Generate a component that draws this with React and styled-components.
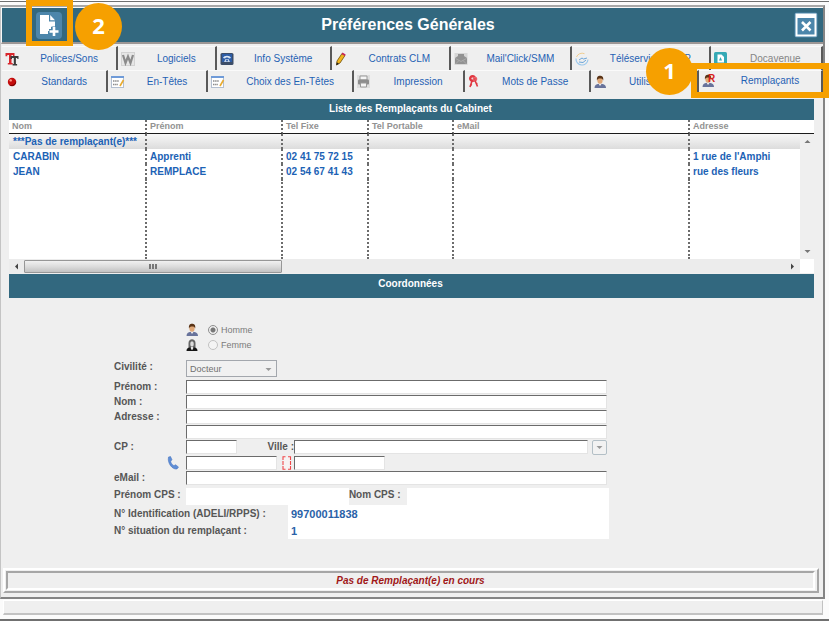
import React from 'react'
import { styled, createGlobalStyle } from 'styled-components'

const columns = [
  { key: 'nom', label: 'Nom', width: 138 },
  { key: 'prenom', label: 'Prénom', width: 136 },
  { key: 'fixe', label: 'Tel Fixe', width: 86 },
  { key: 'portable', label: 'Tel Portable', width: 85 },
  { key: 'email', label: 'eMail', width: 236 },
  { key: 'adresse', label: 'Adresse' },
]

const rows = [
  { nom: '***Pas de remplaçant(e)***' },
  { nom: 'CARABIN', prenom: 'Apprenti', fixe: '02 41 75 72 15', adresse: "1 rue de l'Amphi" },
  { nom: 'JEAN', prenom: 'REMPLACE', fixe: '02 54 67 41 43', adresse: 'rue des fleurs' },
]

const PoliceIcon = () => (
  <svg width="14" height="14" viewBox="0 0 14 14">
    <path d="M.5 1h9v3.200H8V3H6.500v8h1.200v1.500H2.800V11H4V3H2.300v1.200H.5z" fill="#d8262c" />
    <path d="M5.500 4h8v3h-1.200V6h-1.400v6h1.200v1.500H7.600V12h1.200V6H7v1H5.500z" fill="#3a3a3a" />
  </svg>
)

const WordIcon = () => (
  <svg width="14" height="14" viewBox="0 0 14 14">
    <rect x=".5" y=".5" width="13" height="13" fill="#e6e6e6" stroke="#d2d2d2" />
    <path d="M2 3l2.500 8L7 4.500 9.500 11 12 3" fill="none" stroke="#8b8b8b" strokeWidth="2.200" />
  </svg>
)

const SystemIcon = () => (
  <svg width="14" height="14" viewBox="0 0 14 14">
    <rect x=".5" y="1" width="13" height="12" rx="1.500" fill="#3c4d68" />
    <rect x="2" y="2" width="10" height="8" fill="#2d5ca5" />
    <path d="M3 6c1-3 7-3 8 0l-2 .5-1-1H6l-1 1z" fill="#dce7f5" />
    <path d="M4 10l1.500-3h3l1.500 3z" fill="#c3d4ea" />
    <circle cx="7" cy="8.500" r="1" fill="#2d5ca5" />
  </svg>
)

const PencilIcon = () => (
  <svg width="12" height="14" viewBox="0 0 12 14">
    <path d="M2 9L7 1.500l3 2L5 11l-3.500 2z" fill="#f2b51c" stroke="#6d4c08" strokeWidth=".8" />
    <path d="M6.500 2l1-1.500 3.200 2-1 1.500z" fill="#c8245a" />
    <path d="M1.300 13.300l.5-3L4 11.800z" fill="#222" />
  </svg>
)

const MailIcon = () => (
  <svg width="14" height="14" viewBox="0 0 14 14">
    <rect x=".5" y="1" width="13" height="12" fill="#d6d6d6" />
    <path d="M1 6l3-2V2h6v2l3 2v6H1z" fill="#929292" />
    <path d="M1.500 6.500L7 9.500l5.500-3M1.500 12L5 8.500M12.500 12L9 8.500" fill="none" stroke="#b5b5b5" strokeWidth=".7" />
  </svg>
)

const TeleIcon = () => (
  <svg width="14" height="14" viewBox="0 0 14 14" fill="none">
    <path d="M9.500 1.700A6 6 0 0 0 1.500 5" stroke="#f0ce91" />
    <path d="M1 6.500a6 6 0 0 0 12 1" stroke="#9cc8ec" strokeWidth="1.200" />
    <path d="M4 8l3-2 1.500 1L12 6M4 10l4 .5L11 8" stroke="#6ba6da" />
  </svg>
)

const DocavenueIcon = () => (
  <svg width="13" height="13" viewBox="0 0 13 13">
    <rect width="13" height="13" rx="1.500" fill="#35a9b5" />
    <path d="M3.500 2.500h4L10 5v5.500H3.500z" fill="#fff" />
    <path d="M5 8.500L6.500 5 8 8.500z" fill="#35a9b5" />
  </svg>
)

const RedBallIcon = () => (
  <svg width="14" height="14" viewBox="0 0 14 14">
    <circle cx="7" cy="7" r="4.200" fill="#c40d0d" />
    <path d="M4.500 10.200a4.200 4.200 0 0 0 6.500-4.500c-.5 3-3 4.500-6.500 4.500z" fill="#760303" />
    <circle cx="5.700" cy="5.400" r="1.200" fill="#ff9a8a" />
  </svg>
)

const SheetIcon = () => (
  <svg width="14" height="12" viewBox="0 0 14 12">
    <rect x=".5" y=".5" width="12" height="11" fill="#fff" stroke="#b3bfd0" />
    <rect x="0" y="0" width="13" height="2" fill="#6f9bd8" />
    <path d="M2 5h6M2 8.500h5" stroke="#8a8a8a" strokeWidth="1.500" strokeDasharray="1.500 .6" />
    <path d="M9 10L12.500 4" stroke="#e9ab2e" strokeWidth="1.600" />
  </svg>
)

const PrinterIcon = () => (
  <svg width="13" height="13" viewBox="0 0 13 13">
    <rect width="13" height="13" fill="#dedede" />
    <path d="M3 1h7v4H3z" fill="#f5f5f5" stroke="#999" />
    <rect x="1" y="4.500" width="11" height="5" rx="1" fill="#8d8d8d" />
    <path d="M3.500 8h6v4h-6z" fill="#f5f5f5" stroke="#999" />
  </svg>
)

const KeysIcon = () => (
  <svg width="11" height="13" viewBox="0 0 11 13" fill="none">
    <circle cx="4.500" cy="3.500" r="2.300" stroke="#e03640" strokeWidth="2.400" />
    <circle cx="7" cy="4" r="1.600" stroke="#ea6067" strokeWidth="1.500" />
    <path d="M4 6L2 12M2.500 9.500l1.500.5M7 5.500l2.500 6M8 9l1.500-.5" stroke="#e03640" strokeWidth="1.600" />
  </svg>
)

const UserIcon = ({ letter }) => (
  <svg width="14" height="14" viewBox="0 0 14 14">
    <path d="M.5 13c0-3 2-4.300 5.500-4.300s6 1.300 6 4.300z" fill="#68739b" />
    <path d="M4.500 8.500L6 11l1.800-2.500z" fill="#f2f2f2" />
    <ellipse cx="6" cy="5.500" rx="2.600" ry="3.300" fill="#e0a878" />
    <path d="M3 5.500C2.500 2 4 .8 6 .8s3.800 1 3.200 4.700C8.500 3.500 7 3.200 6 3.500c-1.500 0-2.500.5-3 2z" fill="#593316" />
    {letter && <text x="6" y="7.500" fontSize="10" fontWeight="700" fontFamily="Liberation Sans, sans-serif" fill="#d81e1e">{letter}</text>}
  </svg>
)

const WomanIcon = () => (
  <svg width="14" height="12" viewBox="0 0 14 12">
    <path d="M2.500 9V4c0-5 7-5 7 0v5z" fill="#666" />
    <ellipse cx="6" cy="5" rx="1.800" ry="2.800" fill="#ddd" />
    <path d="M.5 12c0-2.500 1-3.200 3.500-3.500l2 2 2-2c2.500.3 3.500 1 3.500 3.500z" fill="#161616" />
    <path d="M5 8h2v2L6 11 5 10z" fill="#e5e5e5" />
  </svg>
)

const PhoneIcon = () => (
  <svg width="12" height="14" viewBox="0 0 12 14">
    <path d="M1.500 1L3.500.5 5 3.800 3.700 5.200c.3 2 1.600 3.700 3.300 4.500l1.500-1L11.500 11l-1.500 2C5.500 14 0 7 1.500 1z" fill="#5f8ed6" stroke="#3e6dbb" strokeWidth=".5" />
  </svg>
)

const MobileIcon = () => (
  <svg width="10" height="14" viewBox="0 0 10 14">
    <rect x="1" y=".7" width="7.500" height="12.500" fill="#f7f3f3" />
    <path d="M1 4V.7h2.500M6 .7h2.500V4M8.500 10v3.200H6M3.500 13.200H1V10M1 5v4M8.500 5v4" fill="none" stroke="#f0474a" strokeWidth="1.100" />
  </svg>
)

const NewPageIcon = () => (
  <svg width="26" height="27" viewBox="0 0 26 27">
    <rect width="26" height="27" rx="4" fill="#4c86ab" />
    <path d="M4 3h9v6.500h6V15h-4v4h-3v3H4z" fill="#fff" />
    <path d="M14.200 3l4.800 5.200h-4.800z" fill="#fff" />
    <path d="M18 14.500v9.500M13 19.500h9.500" stroke="#4c86ab" strokeWidth="5" />
    <path d="M18 15v9M13.500 19.500h9" stroke="#fff" strokeWidth="2.600" />
  </svg>
)

const CloseIcon = () => (
  <svg width="24" height="26" viewBox="0 0 24 26">
    <rect x=".5" y=".5" width="23" height="25" rx="2" fill="#4c86ab" />
    <path d="M1.500 1.500h21v23h-21z M3.500 6v16.500h17V6z" fill="#fff" fillRule="evenodd" />
    <path d="M8 10l8.500 8.500M16.500 10l-8.500 8.500" stroke="#fff" strokeWidth="2.600" />
  </svg>
)

const Arrow = ({ d }) => (
  <svg width="7" height="7" viewBox="0 0 7 7"><path d={d} fill="currentColor" /></svg>
)
const UP = 'M0.500 5L3.500 2 6.500 5z'
const DOWN = 'M0.500 2h6L3.500 5z'
const LEFT = 'M5 .5v6L2 3.500z'
const RIGHT = 'M2 .5v6l3-3z'

const topTabs = [
  { label: 'Polices/Sons', size: 116, icon: <PoliceIcon /> },
  { label: 'Logiciels', size: 98, icon: <WordIcon /> },
  { label: 'Info Système', size: 115, icon: <SystemIcon /> },
  { label: 'Contrats CLM', size: 119, icon: <PencilIcon /> },
  { label: "Mail'Click/SMM", size: 121, icon: <MailIcon /> },
  { label: 'Téléservices DMP', size: 139, icon: <TeleIcon /> },
  { label: 'Docavenue', size: 112, icon: <DocavenueIcon />, muted: true },
]

const bottomTabs = [
  { label: 'Standards', size: 106, icon: <RedBallIcon /> },
  { label: 'En-Têtes', size: 99, icon: <SheetIcon /> },
  { label: 'Choix des En-Têtes', size: 147, icon: <SheetIcon /> },
  { label: 'Impression', size: 110, icon: <PrinterIcon /> },
  { label: 'Mots de Passe', size: 126, icon: <KeysIcon /> },
  { label: 'Utilisateurs', size: 108, icon: <UserIcon /> },
  { label: 'Remplaçants', size: 124, icon: <UserIcon letter="R" />, step: 1 },
]

const TabLine = ({ tabs, height }) => (
  <TabRow $height={height}>
    {tabs.map((tab) => (
      <TabCell key={tab.label} $size={tab.size}>
        <Tab type="button" $muted={tab.muted} $active={!!tab.step}>
          {tab.icon}
          <span>{tab.label}</span>
        </Tab>
        {tab.step && <TabFrame />}
        {tab.step && <TabStep>{tab.step}</TabStep>}
      </TabCell>
    ))}
  </TabRow>
)

const ReplacementList = () => (
  <ListBox>
    <SectionTitle $height={21}>Liste des Remplaçants du Cabinet</SectionTitle>
    <ListArea>
      <Table>
        <colgroup>
          {columns.map((c) => <col key={c.key} width={c.width} />)}
        </colgroup>
        <thead>
          <tr>{columns.map((c) => <Th key={c.key}>{c.label}</Th>)}</tr>
        </thead>
        <tbody>
          {rows.map((row, i) => (
            <Row key={row.nom} $selected={i === 0}>
              {columns.map((c) => <Td key={c.key}>{row[c.key]}</Td>)}
            </Row>
          ))}
          <FillRow>
            {columns.map((c) => <Td key={c.key} />)}
          </FillRow>
        </tbody>
      </Table>
      <ScrollColumn>
        <VerticalScroll>
          <Arrow d={UP} />
          <Arrow d={DOWN} />
        </VerticalScroll>
      </ScrollColumn>
    </ListArea>
    <HorizontalScroll>
      <Arrow d={LEFT} />
      <Thumb><i /><i /><i /></Thumb>
      <Arrow d={RIGHT} />
    </HorizontalScroll>
  </ListBox>
)

const Coordinates = () => (
  <Form>
    <RadioRow>
      <UserIcon />
      <Radio id="homme" type="radio" name="sexe" defaultChecked disabled />
      <RadioLabel htmlFor="homme">Homme</RadioLabel>
    </RadioRow>
    <RadioRow>
      <WomanIcon />
      <Radio id="femme" type="radio" name="sexe" disabled />
      <RadioLabel htmlFor="femme">Femme</RadioLabel>
    </RadioRow>
    <SelectRow>
      <Label htmlFor="civilite">Civilité :</Label>
      <SelectBox>
        <Select id="civilite" disabled><option>Docteur</option></Select>
        <Arrow d={DOWN} />
      </SelectBox>
    </SelectRow>
    <FormRow>
      <Label htmlFor="prenom">Prénom :</Label>
      <Input id="prenom" />
    </FormRow>
    <FormRow>
      <Label htmlFor="nom">Nom :</Label>
      <Input id="nom" />
    </FormRow>
    <FormRow>
      <Label htmlFor="adresse">Adresse :</Label>
      <Input id="adresse" />
    </FormRow>
    <FormRow>
      <Label as="span" />
      <Input aria-label="Adresse (suite)" />
    </FormRow>
    <FormRow>
      <Label htmlFor="cp">CP :</Label>
      <Input id="cp" $width={51} />
      <InnerLabel htmlFor="ville" $width={57}>Ville :</InnerLabel>
      <Input id="ville" />
      <DropButton type="button" aria-label="Choisir une ville"><Arrow d={DOWN} /></DropButton>
    </FormRow>
    <PhoneRow>
      <IconLabel htmlFor="fixe" aria-label="Tel Fixe"><PhoneIcon /></IconLabel>
      <Input id="fixe" $width={91} />
      <MobileLabel htmlFor="portable" aria-label="Tel Portable"><MobileIcon /></MobileLabel>
      <Input id="portable" $width={91} />
    </PhoneRow>
    <FormRow>
      <Label htmlFor="email">eMail :</Label>
      <Input id="email" />
    </FormRow>
    <CpsRow>
      <Label htmlFor="prenomCps">Prénom CPS :</Label>
      <PlainInput id="prenomCps" readOnly />
      <InnerLabel htmlFor="nomCps" $width={58} $gap={8}>Nom CPS :</InnerLabel>
      <PlainInput id="nomCps" $grow={5} readOnly />
    </CpsRow>
    <NumberRow>
      <Label htmlFor="adeli" $wide>N° Identification (ADELI/RPPS) :</Label>
      <PlainInput id="adeli" defaultValue="99700011838" readOnly />
    </NumberRow>
    <NumberRow>
      <Label htmlFor="situation" $wide>N° situation du remplaçant :</Label>
      <PlainInput id="situation" defaultValue="1" readOnly />
    </NumberRow>
  </Form>
)

const App = () => {
  return (
    <Page>
      <GlobalStyle />
      <Window>
        <Header>
          <NewBox>
            <IconButton type="button" aria-label="Nouveau"><NewPageIcon /></IconButton>
            <NewFrame />
            <NewStep>2</NewStep>
          </NewBox>
          <Title>Préférences Générales</Title>
          <IconButton type="button" aria-label="Fermer"><CloseIcon /></IconButton>
        </Header>
        <Tabs>
          <TabLine tabs={topTabs} height={24} />
          <TabLine tabs={bottomTabs} height={22} />
        </Tabs>
        <Main>
          <ReplacementList />
          <SectionTitle $height={24}>Coordonnées</SectionTitle>
          <Coordinates />
        </Main>
        <StatusFrame>
          <Status>Pas de Remplaçant(e) en cours</Status>
        </StatusFrame>
      </Window>
      <BottomBar />
    </Page>
  )
}

const GlobalStyle = createGlobalStyle`
  * {
    box-sizing: border-box;
  }
  body {
    margin: 0;
    background: #ffffff;
  }
  body, button, input, select {
    font-family: "Liberation Sans", Arial, sans-serif;
    font-size: 10px;
  }
  svg {
    display: block;
    flex-shrink: 0;
  }
`

const Page = styled.div`
  min-height: 100vh;
  display: flex;
  flex-direction: column;
  overflow: hidden;
  background: linear-gradient(#ffffff 1px, #6f7070 1px, #6f7070 2px, #fbfbfb 2px);
  padding-top: 5px;
  border-bottom: 2px solid #707070;
`

const Window = styled.div`
  flex: 1;
  display: flex;
  flex-direction: column;
  margin-right: 4px;
  border: 2px solid #848484;
  border-top-color: #a8a8a8;
  border-left: 1px solid #c4c4c4;
  background: #efefef;
`

const Header = styled.header`
  height: 37px;
  display: flex;
  align-items: center;
  padding: 0 5px 0 34px;
  background: #32687f;
  border: 1px solid #f8f8f8;
  border-bottom: 2px solid #9c9695;
  border-right: 0;
`

const NewBox = styled.div`
  position: relative;
`

const IconButton = styled.button`
  display: block;
  padding: 0;
  border: 0;
  background: none;
  cursor: pointer;
`

const Frame = styled.div`
  position: absolute;
  border: 6px solid #f6a000;
  pointer-events: none;
`

const NewFrame = styled(Frame)`
  top: -12px;
  left: -10px;
  width: 47px;
  height: 47px;
`

const Step = styled.div`
  position: absolute;
  z-index: 1;
  width: 47px;
  height: 47px;
  border-radius: 50%;
  background: #f6a000;
  color: #ffffff;
  font: 700 22px/45px "Open Sans", "Noto Sans", sans-serif;
  text-align: center;
`

const NewStep = styled(Step)`
  top: -9px;
  left: 39px;
`

const Title = styled.h1`
  flex: 1;
  margin: 0;
  padding-right: 40px;
  color: #ffffff;
  font-size: 16px;
  line-height: 20px;
  text-align: center;
`

const Tabs = styled.nav`
  padding: 2px 0 0 1px;
  background: #efefef;
`

const TabRow = styled.div`
  display: flex;
  height: ${({ $height }) => $height}px;
`

const TabCell = styled.div`
  position: relative;
  flex: ${({ $size }) => $size} 1 0;
  border-top: 1px solid #fafafa;
  border-right: 2px solid #595959;
`

const Tab = styled.button`
  width: 100%;
  height: 100%;
  display: flex;
  align-items: center;
  padding: 0 0 ${({ $active }) => ($active ? 2 : 0)}px 3px;
  border: 0;
  background: #efefef;
  color: ${({ $muted }) => ($muted ? '#858585' : '#1f62b4')};
  white-space: nowrap;
  cursor: pointer;
  &>span{
    flex: 1;
    padding-left: 3px;
    text-align: center;
  }
`

const TabFrame = styled(Frame)`
  top: -8px;
  left: -8px;
  right: -8px;
  height: 35px;
`

const TabStep = styled(Step)`
  top: -23px;
  left: -53px;
`

const Main = styled.main`
  flex: 1;
  padding: 7px 9px 0 8px;
`

const ListBox = styled.section`
  margin-bottom: 1px;
  background: #ffffff;
`

const SectionTitle = styled.h2`
  height: ${({ $height }) => $height}px;
  margin: 0;
  padding-right: 2px;
  background: #32687f;
  color: #ffffff;
  font-size: 10px;
  line-height: 19px;
  text-align: center;
`

const ListArea = styled.div`
  display: flex;
  height: 139px;
`

const Table = styled.table`
  flex: 1;
  min-width: 0;
  height: 100%;
  table-layout: fixed;
  border-collapse: separate;
  border-spacing: 0;
`

const Th = styled.th`
  height: 14px;
  padding: 0 3px;
  border-bottom: 1px solid #1c1c1c;
  color: #929292;
  font-size: 9px;
  line-height: 13px;
  text-align: left;
  &:not(:last-child){
    border-right: 2px dotted #6c6c6c;
  }
`

const Td = styled.td`
  height: 15px;
  padding: 0 0 1px 3px;
  color: #1c62b5;
  font-weight: 700;
  line-height: 13px;
  white-space: nowrap;
  &:first-child{
    padding-left: 4px;
  }
  &:not(:last-child){
    border-right: 2px dotted #6c6c6c;
  }
`

const Row = styled.tr`
  background: ${({ $selected }) => ($selected ? 'linear-gradient(#f8f8f8, #dcdcdc)' : 'none')};
`

const FillRow = styled.tr`
  height: 100%;
`

const ScrollColumn = styled.div`
  width: 14px;
  display: flex;
  padding-top: 13px;
`

const VerticalScroll = styled.div`
  flex: 1;
  display: flex;
  flex-direction: column;
  justify-content: space-between;
  align-items: center;
  padding: 4px 0;
  border-top: 1px solid #1c1c1c;
  background: #efefef;
  color: #777777;
`

const HorizontalScroll = styled.div`
  height: 14px;
  display: flex;
  align-items: center;
  margin-right: 14px;
  padding: 0 4px;
  background: #ececec;
  color: #444444;
  &>svg:last-child{
    margin-left: auto;
  }
`

const Thumb = styled.div`
  width: 33%;
  height: 13px;
  display: flex;
  justify-content: center;
  align-items: center;
  gap: 1px;
  margin-left: 4px;
  border: 1px solid #979797;
  border-radius: 1px;
  background: linear-gradient(#f1f1f1, #dcdcdc 50%, #c2c2c2);
  &>i{
    width: 2px;
    height: 5px;
    background: #777777;
  }
`

const Form = styled.form`
  max-width: 600px;
  padding: 24px 0 24px 105px;
`

const FormRow = styled.div`
  height: 15px;
  display: flex;
  align-items: flex-start;
  margin-right: 2px;
`

const RadioRow = styled(FormRow)`
  align-items: center;
  padding-left: 72px;
`

const SelectRow = styled(FormRow)`
  height: 20px;
  margin-top: 8px;
`

const PhoneRow = styled(FormRow)`
  height: 16px;
  padding-top: 1px;
`

const CpsRow = styled(FormRow)`
  height: 17px;
  margin: 2px 0 0;
`

const NumberRow = styled(FormRow)`
  height: 17px;
  align-items: center;
  margin: 0;
`

const Label = styled.label`
  width: ${({ $wide }) => ($wide ? 174 : 72)}px;
  flex-shrink: 0;
  color: #565656;
  font-weight: 700;
  line-height: 14px;
  white-space: nowrap;
`

const IconLabel = styled(Label)`
  padding-left: 53px;
`

const InnerLabel = styled(Label)`
  width: ${({ $width }) => $width}px;
  padding-right: ${({ $gap }) => $gap || 0}px;
  text-align: right;
`

const MobileLabel = styled(Label)`
  width: 17px;
  padding-left: 5px;
`

const Input = styled.input`
  ${({ $width }) => ($width ? `width: ${$width}px;` : 'flex: 1;')}
  min-width: 0;
  height: 14px;
  padding: 0 3px;
  border: 1px solid #e4e4e4;
  border-top-color: #6b6b6b;
  border-left-color: #6b6b6b;
  background: #ffffff;
  outline: 0;
`

const PlainInput = styled.input`
  flex: ${({ $grow }) => $grow || 4} 1 0;
  min-width: 0;
  height: 17px;
  padding: 0 3px;
  border: 0;
  background: #ffffff;
  color: #2a62a8;
  font-size: 11px;
  font-weight: 700;
  outline: 0;
`

const Radio = styled.input`
  appearance: none;
  width: 10px;
  height: 10px;
  margin: 0 3px 0 8px;
  border: 1px solid #c2c2c2;
  border-radius: 50%;
  background: #f4f4f4;
  &:checked{
    border-color: #8d8d8d;
    background: radial-gradient(#777777 2px, #efefef 3px);
  }
`

const RadioLabel = styled.label`
  color: #7b7b7b;
  font-size: 9px;
  line-height: 12px;
`

const SelectBox = styled.div`
  position: relative;
  width: 91px;
  color: #999999;
  &>svg{
    position: absolute;
    top: 6px;
    right: 5px;
    pointer-events: none;
  }
`

const Select = styled.select`
  appearance: none;
  display: block;
  width: 100%;
  height: 17px;
  padding: 0 3px;
  border: 1px solid #a3a7ad;
  border-radius: 0;
  background: #f1f1f1;
  color: #707070;
  font-size: 9px;
  opacity: 1;
`

const DropButton = styled.button`
  width: 15px;
  height: 15px;
  display: flex;
  justify-content: center;
  align-items: center;
  margin-left: 4px;
  padding: 0;
  border: 1px solid #b3bfc6;
  border-radius: 2px;
  background: #f2f2f2;
  color: #999999;
`

const StatusFrame = styled.footer`
  margin: 0 4px 4px 2px;
  padding: 1px 2px 1px 1px;
  border: 2px solid #ffffff;
  border-right-color: #a6a6a6;
  border-bottom-color: #a6a6a6;
`

const Status = styled.div`
  height: 19px;
  border: 2px solid #ffffff;
  border-top-color: #a6a6a6;
  border-left-color: #a6a6a6;
  color: #a01818;
  font-style: italic;
  font-weight: 700;
  line-height: 15px;
  text-align: center;
`

const BottomBar = styled.div`
  height: 15px;
  margin: 1px 6px 4px 3px;
  border: 1px solid #ffffff;
  border-right: 1px solid #c2c2c2;
  border-bottom: 2px solid #c2c2c2;
  background: #efefef;
`

export default App
